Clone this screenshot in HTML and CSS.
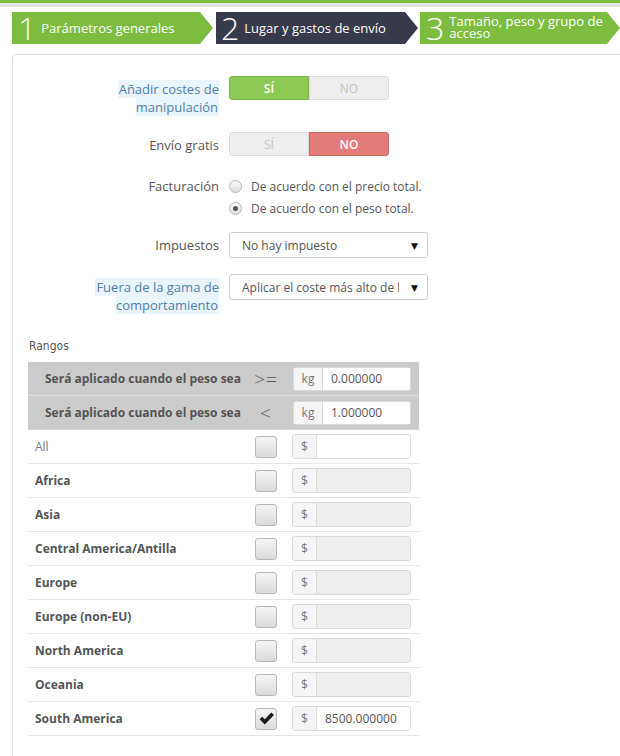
FILE: index.html
```html
<!DOCTYPE html>
<html lang="es">
<head>
<meta charset="utf-8">
<title>Transportista</title>
<link rel="stylesheet" href="styles.css">
</head>
<body>
<div class="topbar"></div>
<div class="steps">
  <div class="step step-green s1"><span class="num">1</span><span class="txt">Parámetros generales</span></div>
  <div class="step step-dark s2"><span class="num">2</span><span class="txt">Lugar y gastos de envío</span></div>
  <div class="step step-green s3"><span class="num">3</span><span class="txt two">Tamaño, peso y grupo de acceso</span></div>
</div>

<div class="panel">
  <div class="row r-tall">
    <div class="lbl"><span class="tip">Añadir costes de manipulación</span></div>
    <div class="switch">
      <span class="opt on-yes">SÍ</span><span class="opt off">NO</span>
    </div>
  </div>

  <div class="row">
    <div class="lbl">Envío gratis</div>
    <div class="switch">
      <span class="opt off">SÍ</span><span class="opt on-no">NO</span>
    </div>
  </div>

  <div class="row r-radio">
    <div class="lbl">Facturación</div>
    <div class="radios">
      <div class="radio-line"><span class="radio"></span>De acuerdo con el precio total.</div>
      <div class="radio-line"><span class="radio checked"></span>De acuerdo con el peso total.</div>
    </div>
  </div>

  <div class="row">
    <div class="lbl">Impuestos</div>
    <div class="select"><span class="sel-text">No hay impuesto</span><span class="caret">▼</span></div>
  </div>

  <div class="row r-tall last">
    <div class="lbl"><span class="tip">Fuera de la gama de comportamiento</span></div>
    <div class="select"><span class="sel-text clip">Aplicar el coste más alto de los rangos definidos</span><span class="caret">▼</span></div>
  </div>

  <div class="heading">Rangos</div>

  <div class="ranges">
    <div class="tr head">
      <div class="c1">Será aplicado cuando el peso sea</div>
      <div class="c2 op">&gt;=</div>
      <div class="c3"><div class="ig"><span class="addon kg">kg</span><span class="field">0.000000</span></div></div>
    </div>
    <div class="tr head head2">
      <div class="c1">Será aplicado cuando el peso sea</div>
      <div class="c2 op">&lt;</div>
      <div class="c3"><div class="ig"><span class="addon kg">kg</span><span class="field">1.000000</span></div></div>
    </div>

    <div class="tr">
      <div class="c1 all">All</div>
      <div class="c2"><span class="cb"></span></div>
      <div class="c3"><div class="ig small"><span class="addon">$</span><span class="field"></span></div></div>
    </div>
    <div class="tr">
      <div class="c1 zone">Africa</div>
      <div class="c2"><span class="cb"></span></div>
      <div class="c3"><div class="ig small"><span class="addon">$</span><span class="field dis"></span></div></div>
    </div>
    <div class="tr">
      <div class="c1 zone">Asia</div>
      <div class="c2"><span class="cb"></span></div>
      <div class="c3"><div class="ig small"><span class="addon">$</span><span class="field dis"></span></div></div>
    </div>
    <div class="tr">
      <div class="c1 zone">Central America/Antilla</div>
      <div class="c2"><span class="cb"></span></div>
      <div class="c3"><div class="ig small"><span class="addon">$</span><span class="field dis"></span></div></div>
    </div>
    <div class="tr">
      <div class="c1 zone">Europe</div>
      <div class="c2"><span class="cb"></span></div>
      <div class="c3"><div class="ig small"><span class="addon">$</span><span class="field dis"></span></div></div>
    </div>
    <div class="tr">
      <div class="c1 zone">Europe (non-EU)</div>
      <div class="c2"><span class="cb"></span></div>
      <div class="c3"><div class="ig small"><span class="addon">$</span><span class="field dis"></span></div></div>
    </div>
    <div class="tr">
      <div class="c1 zone">North America</div>
      <div class="c2"><span class="cb"></span></div>
      <div class="c3"><div class="ig small"><span class="addon">$</span><span class="field dis"></span></div></div>
    </div>
    <div class="tr">
      <div class="c1 zone">Oceania</div>
      <div class="c2"><span class="cb"></span></div>
      <div class="c3"><div class="ig small"><span class="addon">$</span><span class="field dis"></span></div></div>
    </div>
    <div class="tr">
      <div class="c1 zone">South America</div>
      <div class="c2"><span class="cb checked"><svg viewBox="0 0 16 16" width="17" height="17"><path d="M1.5 8.6 L3.9 6.3 L6.4 8.8 L12.6 2.4 L15 4.8 L6.4 13.6 Z" fill="#1a1a1a"/></svg></span></div>
      <div class="c3"><div class="ig small"><span class="addon">$</span><span class="field val">8500.000000</span></div></div>
    </div>
  </div>
</div>
</body>
</html>
```

FILE: styles.css
```css
* { box-sizing: border-box; }

html, body {
  margin: 0;
  padding: 0;
  background: #fff;
  overflow: hidden;
}

body {
  font-family: "Open Sans", "DejaVu Sans", sans-serif;
  font-size: 13px;
  color: #555;
}

.topbar {
  height: 7px;
  background: #e3e3e3;
  border-top: 3px solid #7cbd3f;
}

/* wizard steps */
.steps {
  display: flex;
  margin: 5px 0 0 12px;
  height: 32px;
}

.step {
  display: flex;
  align-items: center;
  height: 32px;
  color: #fff;
  clip-path: polygon(0 0, calc(100% - 13px) 0, 100% 50%, calc(100% - 13px) 100%, 0 100%);
}

.step-green { background: #7cbd3f; }
.step-dark { background: #363a4a; }

.s1 { width: 201px; padding-left: 6px; }
.s2 { width: 202px; margin-left: 3px; padding-left: 5px; }
.s3 { width: 200px; margin-left: 2px; padding-left: 6px; }

.num {
  font-size: 32px;
  font-weight: 300;
  line-height: 32px;
  margin-right: 5px;
}

.txt {
  font-size: 13px;
  line-height: 16px;
}

.txt.two {
  font-size: 13px;
  line-height: 12px;
  width: 160px;
  margin-top: -2px;
}

/* panel */
.panel {
  margin: 10px -20px 0 12px;
  border: 1px solid #e2e2e2;
  border-radius: 5px;
  padding: 21px 15px 20px 15px;
  min-height: 720px;
}

.row {
  display: flex;
  align-items: flex-start;
  margin-bottom: 16px;
}

.row.last { margin-bottom: 0; }

.lbl {
  width: 191px;
  flex: none;
  text-align: right;
  padding-top: 4px;
  padding-left: 64px;
  line-height: 18px;
  margin-right: 10px;
  font-size: 13px;
  color: #555;
}

.tip {
  color: #4f82a9;
  background: #eaf4fb;
  padding: 0 1px;
}

/* switch */
.switch {
  display: flex;
  width: 160px;
  height: 24px;
}

.opt {
  width: 80px;
  display: flex;
  align-items: center;
  justify-content: center;
  font-size: 12px;
  border: 1px solid #dcdcdc;
  background: #eeeeee;
  color: #c4c4c4;
}

.opt:first-child { border-radius: 3px 0 0 3px; }
.opt:last-child { border-radius: 0 3px 3px 0; }

.opt.on-yes {
  background: #8bc954;
  border-color: #7cb848;
  color: #fff;
  font-weight: 600;
}

.opt.on-no {
  background: #e27c79;
  border-color: #c96a67;
  color: #fff;
  font-weight: 600;
}

/* radios */
.r-radio .lbl { padding-top: 5px; }

.radios {
  padding-top: 3px;
}

.r-radio { margin-bottom: 13px; }

.radio-line {
  display: flex;
  align-items: center;
  height: 22px;
  font-size: 12px;
  color: #555;
}

.radio {
  width: 13px;
  height: 13px;
  border-radius: 50%;
  border: 1px solid #b9b9b9;
  background: linear-gradient(#fafafa, #dedede);
  margin-right: 9px;
  display: flex;
  align-items: center;
  justify-content: center;
}

.radio.checked::after {
  content: "";
  width: 5px;
  height: 5px;
  border-radius: 50%;
  background: #555;
}

/* select */
.select {
  width: 199px;
  height: 26px;
  border: 1px solid #cfcfcf;
  border-radius: 3px;
  display: flex;
  align-items: center;
  padding: 0 9px 0 12px;
  background: #fff;
}

.sel-text {
  flex: 1;
  font-size: 12px;
  color: #555;
  white-space: nowrap;
  overflow: hidden;
}

.sel-text.clip {
  flex: none;
  width: 157px;
}

.caret {
  margin-left: auto;
  font-size: 9px;
  color: #111;
}

/* ranges */
.heading {
  font-family: "DejaVu Sans Condensed", "DejaVu Sans", sans-serif;
  font-size: 12px;
  line-height: 18px;
  color: #555;
  margin: 23px 0 7px 1px;
}

.ranges {
  width: 391px;
}

.tr {
  display: grid;
  grid-template-columns: 213px 50px 128px;
  align-items: center;
  height: 34px;
  border-bottom: 1px solid #e6e6e6;
}

.tr.head {
  background: #cbcbcb;
  border-bottom: 1px solid #e0e0e0;
}

.tr.head2 {
  border-bottom: 1px solid #d8d8d8;
}

.c1 {
  padding-left: 7px;
  font-size: 12px;
}

.head .c1 {
  padding-left: 17px;
  font-weight: 700;
  color: #555;
}

.c1.all { color: #777; }
.c1.zone { font-weight: 700; color: #555; }

.c2 {
  display: flex;
  justify-content: center;
  align-items: center;
}

.op {
  font-size: 19px;
  color: #5a5a5a;
  font-weight: 300;
  letter-spacing: 1px;
}

.c3 {
  padding-left: 2px;
}

.ig {
  display: flex;
  width: 118px;
  height: 24px;
  border: 1px solid #d9d9d9;
  border-radius: 3px;
  overflow: hidden;
  background: #fff;
}

.ig.small {
  margin-left: -1px;
  width: 119px;
  height: 25px;
}

.addon {
  width: 24px;
  flex: none;
  display: flex;
  align-items: center;
  justify-content: center;
  background: #f5f5f5;
  border-right: 1px solid #dcdcdc;
  color: #777;
  font-size: 12px;
}

.addon.kg { width: 29px; }

.field {
  flex: 1;
  display: flex;
  align-items: center;
  padding-left: 8px;
  font-size: 12px;
  color: #555;
  background: #fff;
}

.field.dis { background: #eeeeee; }
.field.val { padding-left: 8px; }

.cb {
  width: 22px;
  height: 22px;
  border: 1px solid #b8b8b8;
  border-radius: 3px;
  background: linear-gradient(#f5f5f5, #dadada);
  display: flex;
  align-items: center;
  justify-content: center;
}
```
